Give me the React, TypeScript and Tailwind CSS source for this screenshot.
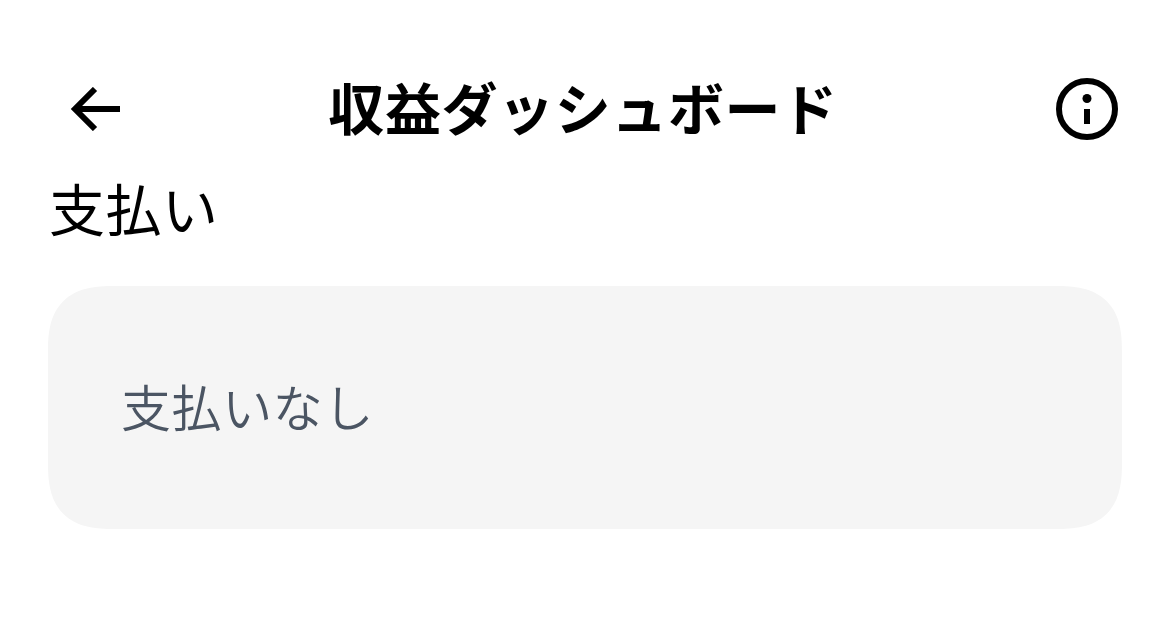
import type { ReactNode } from "react";

type IconButtonProps = {
  label: string;
  children: ReactNode;
};

export default function App() {
  return (
    <main className="h-[639px] w-full overflow-hidden bg-white pt-[66px] font-['Noto_Sans_CJK_JP',sans-serif] text-black">
      <header className="flex h-[86px] items-center justify-between pr-[51px] pl-[70px]">
        <IconButton label="戻る">
          <svg viewBox="0 0 52 44" className="h-11 w-[52px]" fill="none" stroke="currentColor" strokeWidth="6">
            <path d="M25 2 5 22l20 20M4 22h46" />
          </svg>
        </IconButton>
        <h1 className="mr-3 pb-1.5 text-[56px] leading-[80px] font-bold tracking-[0.6px] whitespace-nowrap">
          収益ダッシュボード
        </h1>
        <IconButton label="情報">
          <svg viewBox="0 0 62 62" className="size-[62px]">
            <circle cx="31" cy="31" r="28" fill="none" stroke="currentColor" strokeWidth="6" />
            <circle cx="31" cy="20.5" r="4.5" fill="currentColor" />
            <path d="M28 31h6v15h-6z" fill="currentColor" />
          </svg>
        </IconButton>
      </header>

      <section className="pr-[47px] pl-12">
        <h2 className="pl-px text-[56px] leading-[110px] tracking-[0.5px]">支払い</h2>
        <div className="mt-6 flex h-[243px] items-center rounded-[66px] bg-[#f5f5f5] px-[73px] [corner-shape:superellipse(1.4)]">
          <p className="pb-1.5 text-[50px] leading-none font-[350] tracking-[0.6px] text-[#4b5563]">支払いなし</p>
        </div>
      </section>
    </main>
  );
}

function IconButton({ label, children }: IconButtonProps) {
  return (
    <button type="button" aria-label={label} className="shrink-0">
      {children}
    </button>
  );
}
